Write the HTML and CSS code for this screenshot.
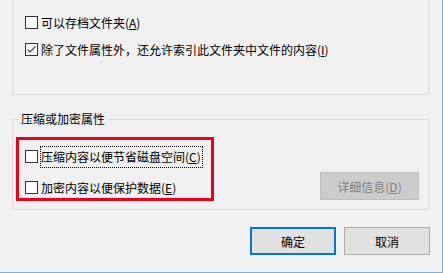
FILE: index.html
```html
<!DOCTYPE html>
<html lang="zh-CN">
<head>
  <meta charset="UTF-8" />
  <title>属性</title>
  <link rel="stylesheet" href="styles.css">
</head>
<body>
  <div class="window">

    <div class="group group-top">
      <label class="check-row">
        <span class="box"></span>
        <span class="text">可以存档文件夹(<u>A</u>)</span>
      </label>
      <label class="check-row">
        <span class="box">
          <svg width="11" height="11" viewBox="0 0 11 11"><polyline points="1.5,5.5 4,8 9.5,2.5" fill="none" stroke="#3c3c3c" stroke-width="1.1"/></svg>
        </span>
        <span class="text">除了文件属性外，还允许索引此文件夹中文件的内容(<u>I</u>)</span>
      </label>
    </div>

    <div class="group group-attr">
      <span class="legend">压缩或加密属性</span>
      <div class="attr-list">
        <label class="check-row">
          <span class="box"></span>
          <span class="text focused">压缩内容以便节省磁盘空间(<u>C</u>)</span>
        </label>
        <label class="check-row">
          <span class="box"></span>
          <span class="text">加密内容以便保护数据(<u>E</u>)</span>
        </label>
      </div>
      <button class="btn btn-disabled details" disabled>详细信息(<u>D</u>)</button>
      <div class="highlight"></div>
    </div>

    <div class="actions">
      <button class="btn btn-default">确定</button>
      <button class="btn">取消</button>
    </div>

  </div>
</body>
</html>
```

FILE: styles.css
```css
body {
  margin: 0;
  background: #f0f0f0;
  font-family: "Microsoft YaHei", "Noto Sans CJK SC", sans-serif;
  font-size: 12px;
  color: #000;
}

.window {
  width: 442px;
  height: 272px;
  border-right: 1px solid #78b4e0;
  border-bottom: 1px solid #78b4e0;
  overflow: hidden;
}

.group {
  box-sizing: border-box;
  width: 417px;
  margin-left: 12px;
  border: 1px solid #dcdcdc;
}

.group-top {
  height: 95px;
  border-top: none;
  padding: 16px 0 0 12px;
  display: flex;
  flex-direction: column;
  gap: 14px;
}

.check-row {
  display: flex;
  align-items: center;
  height: 13px;
}

.box {
  box-sizing: border-box;
  width: 13px;
  height: 13px;
  border: 1px solid #333;
  background: #fff;
  margin-right: 3px;
  flex-shrink: 0;
  display: flex;
  align-items: center;
  justify-content: center;
}

.box svg {
  display: block;
}

.text {
  line-height: 16px;
  white-space: nowrap;
}

.focused {
  padding: 2px 1px 2px 0;
  outline: 1px dotted #000;
}

.group-attr {
  position: relative;
  height: 91px;
  margin-top: 24px;
  padding: 30px 9px 9px 12px;
  display: flex;
  justify-content: space-between;
  align-items: flex-end;
}

.legend {
  position: absolute;
  top: -9px;
  left: 6px;
  padding: 0 2px;
  line-height: 16px;
  background: #f0f0f0;
}

.attr-list {
  align-self: flex-start;
  display: flex;
  flex-direction: column;
  gap: 18px;
}

.highlight {
  position: absolute;
  left: 3px;
  top: 17px;
  width: 198px;
  height: 64px;
  box-sizing: border-box;
  border: 3px solid #e8001c;
}

.btn {
  box-sizing: border-box;
  height: 28px;
  padding: 0;
  font-family: inherit;
  font-size: 12px;
  color: #000;
  background: #e1e1e1;
  border: 1px solid #adadad;
}

.btn-disabled {
  width: 99px;
  background: #cccccc;
  border-color: #bfbfbf;
  color: #838383;
}

.btn-default {
  border: 2px solid #0078d7;
}

.actions {
  display: flex;
  justify-content: flex-end;
  gap: 8px;
  margin-top: 17px;
  padding-right: 12px;
}

.actions .btn {
  width: 86px;
}
```
